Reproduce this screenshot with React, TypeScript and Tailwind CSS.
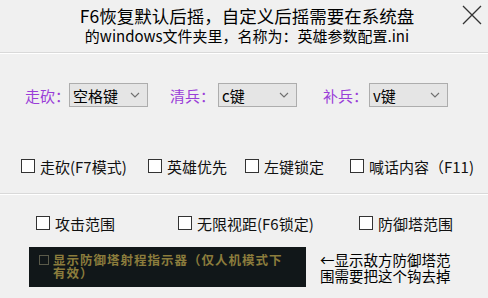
import { ReactNode } from "react";

const font = { fontFamily: '"Noto Sans CJK SC", "Noto Sans", sans-serif' };

function Chevron() {
  return (
    <svg width="10" height="6" viewBox="0 0 10 6" className="shrink-0">
      <path d="M1 1 L5 5 L9 1" fill="none" stroke="#6f6f6f" strokeWidth="1.1" />
    </svg>
  );
}

function Select({ value, label, labelW }: { value: string; label: string; labelW: string }) {
  return (
    <div className="flex items-center shrink-0">
      <span className={`${labelW} shrink-0 whitespace-nowrap text-[15px] leading-none text-[#9a3ed8]`}>{label}</span>
      <div className="w-[79px] h-[24px] shrink-0 bg-[#e5e5e5] border border-[#adadad] flex items-center justify-between pl-[3px] pr-[7px]">
        <span className="text-[15px] leading-none text-black whitespace-nowrap">{value}</span>
        <Chevron />
      </div>
    </div>
  );
}

function Check({ children, w }: { children: ReactNode; w?: string }) {
  return (
    <label className={`flex items-center gap-[5px] h-[20px] shrink-0 ${w ?? ""}`}>
      <span className="w-[14px] h-[14px] bg-white border border-[#333] shrink-0" />
      <span className="text-[15px] leading-none text-[#111] whitespace-nowrap">{children}</span>
    </label>
  );
}

export default function App() {
  return (
    <div className="relative w-[488px] h-[298px] bg-[#f0f0f0] overflow-hidden" style={font}>
      <header className="h-[52px] flex flex-col items-center pt-[6px] text-black">
        <div className="text-[17.5px] leading-[20px] pl-[6px] whitespace-nowrap">F6恢复默认后摇，自定义后摇需要在系统盘</div>
        <div className="text-[15px] leading-[17px] pl-[6px] mt-[1px] whitespace-nowrap">的windows文件夹里，名称为：英雄参数配置.ini</div>
      </header>
      <button className="absolute right-[6px] top-[5px] w-[20px] h-[20px]">
        <svg width="20" height="20" viewBox="0 0 20 20">
          <path d="M1 1 L19 19 M19 1 L1 19" stroke="#333" strokeWidth="1.3" />
        </svg>
      </button>
      <div className="border-t border-[#d9d9d9] border-b border-b-white" />

      <section className="h-[139px] flex flex-col">
        <div className="flex items-center pl-[25px] pt-[29px]">
          <Select label="走砍：" value="空格键" labelW="w-[44px]" />
          <div className="ml-[22px]">
            <Select label="清兵：" value="c键" labelW="w-[48px]" />
          </div>
          <div className="ml-[26px]">
            <Select label="补兵：" value="v键" labelW="w-[46px]" />
          </div>
        </div>
        <div className="flex items-center pl-[21px] mt-[49px]">
          <Check w="w-[127px]">走砍(F7模式)</Check>
          <Check w="w-[97px]">英雄优先</Check>
          <Check w="w-[105px]">左键锁定</Check>
          <Check>喊话内容（F11)</Check>
        </div>
      </section>
      <div className="border-t border-[#d9d9d9] border-b border-b-white" />

      <section className="flex flex-col">
        <div className="flex items-center pl-[36px] pt-[18px]">
          <Check w="w-[142px]">攻击范围</Check>
          <Check w="w-[181px]">无限视距(F6锁定)</Check>
          <Check>防御塔范围</Check>
        </div>
        <div className="flex items-start pl-[29px] mt-[14px]">
          <div className="w-[277px] h-[40px] shrink-0 bg-[#111719] flex items-start pl-[10px] pt-[6px] gap-[4px]">
            <span className="w-[10px] h-[10px] border border-[#5a5a4a] mt-[2px] shrink-0" />
            <div className="text-[12.5px] leading-[13px] font-bold tracking-[1px] text-[#8b7c3c] whitespace-nowrap">
              显示防御塔射程指示器（仅人机模式下
              <br />
              有效）
            </div>
          </div>
          <div className="ml-[14px] mt-[5px] text-[14.5px] leading-[16px] text-black whitespace-nowrap">
            ←显示敌方防御塔范
            <br />
            围需要把这个钩去掉
          </div>
        </div>
      </section>
    </div>
  );
}
